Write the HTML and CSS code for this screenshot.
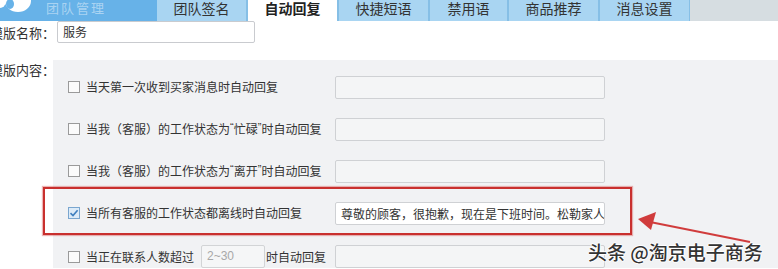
FILE: index.html
```html
<!DOCTYPE html>
<html lang="zh-CN">
<head>
<meta charset="utf-8">
<title>自动回复</title>
<link rel="stylesheet" href="styles.css">
</head>
<body>
<header class="topbar">
  <div class="logo">
    <svg class="logo-mark" width="40" height="14" viewBox="0 0 40 14">
      <ellipse cx="3" cy="2" rx="7" ry="6" fill="#fff"/>
      <ellipse cx="22" cy="1" rx="13" ry="11" fill="#fff"/>
      <ellipse cx="14" cy="4" rx="4" ry="5" fill="#67b2e8"/>
    </svg>
    <span class="logo-text">团队管理</span>
  </div>
  <nav class="tabs">
    <span class="tab">团队签名</span>
    <span class="tab tab-active">自动回复</span>
    <span class="tab">快捷短语</span>
    <span class="tab tab-narrow">禁用语</span>
    <span class="tab">商品推荐</span>
    <span class="tab">消息设置</span>
  </nav>
  <div class="topbar-rest"></div>
</header>

<main class="form">
  <div class="name-row">
    <span class="field-label">模版名称：</span>
    <div class="name-input">服务</div>
  </div>
  <div class="content-row">
    <span class="field-label content-label">模版内容：</span>
    <div class="panel">
      <div class="rule">
        <span class="cb"></span>
        <span class="rule-text">当天第一次收到买家消息时自动回复</span>
        <span class="reply-input"></span>
      </div>
      <div class="rule">
        <span class="cb"></span>
        <span class="rule-text">当我（客服）的工作状态为<span class="q">“</span>忙碌<span class="q">”</span>时自动回复</span>
        <span class="reply-input"></span>
      </div>
      <div class="rule">
        <span class="cb"></span>
        <span class="rule-text">当我（客服）的工作状态为<span class="q">“</span>离开<span class="q">”</span>时自动回复</span>
        <span class="reply-input"></span>
      </div>
      <div class="rule rule-marked">
        <span class="cb cb-checked">
          <svg width="12" height="12" viewBox="0 0 12 12"><path d="M2.5 6.2 L5 8.6 L9.6 3.2" fill="none" stroke="#3f7fbf" stroke-width="1.6"/></svg>
        </span>
        <span class="rule-text">当所有客服的工作状态都离线时自动回复</span>
        <span class="reply-input reply-filled">尊敬的顾客，很抱歉，现在是下班时间。松勒家人会在上班后第一时间回复您</span>
        <span class="highlight"></span>
      </div>
      <div class="rule rule-last">
        <span class="cb"></span>
        <span class="rule-text">当正在联系人数超过<span class="count-input">2~30</span>时自动回复</span>
        <span class="reply-input"></span>
      </div>
    </div>
  </div>
</main>

<svg class="arrow" width="778" height="269" viewBox="0 0 778 269">
  <line x1="750" y1="242" x2="650" y2="222" stroke="#d03c3c" stroke-width="2.2"/>
  <polygon points="638,219 656,212 651,230" fill="#d03c3c"/>
</svg>
<div class="watermark">头条 @淘京电子商务</div>
</body>
</html>
```
FILE: styles.css
```css
html, body {
  margin: 0;
  padding: 0;
}
body {
  width: 778px;
  height: 269px;
  overflow: hidden;
  position: relative;
  background: #fff;
  color: #333;
  font-family: "Noto Sans CJK SC", "Noto Sans", sans-serif;
}

/* top bar */
.topbar {
  display: flex;
  height: 21px;
  background: #86bfe6;
}
.logo {
  width: 157px;
  background: #67b2e8;
  position: relative;
  overflow: hidden;
  display: flex;
}
.logo-mark {
  flex: none;
  margin-left: -4px;
}
.logo-text {
  margin-left: 10px;
  padding-top: 1px;
  font-size: 13px;
  line-height: 14px;
  height: 14px;
  color: rgba(255, 255, 255, 0.45);
  letter-spacing: 2px;
}
.tabs {
  display: flex;
  gap: 2px;
}
.tab {
  width: 89px;
  background: #a9d5f2;
  font-size: 14px;
  line-height: 15px;
  padding-top: 1px;
  text-align: center;
  color: #333;
}
.tab-narrow {
  width: 77px;
}
.tab-active {
  background: #fff;
  color: #222;
  font-weight: bold;
}
.topbar-rest {
  flex: 1;
  margin-left: 1px;
  background: #d6dde1;
}

/* form */
.form {
  margin-left: -10px;
}
.field-label {
  font-size: 13px;
  color: #333;
  white-space: nowrap;
}
.name-row {
  display: flex;
  align-items: center;
  height: 22px;
}
.name-row .field-label {
  width: 67px;
}
.name-input {
  width: 198px;
  height: 22px;
  box-sizing: border-box;
  border: 1px solid #c9cbcf;
  border-radius: 2px;
  background: #fff;
  font-size: 12px;
  line-height: 20px;
  padding-left: 5px;
  color: #333;
}
.content-row {
  display: flex;
  margin-top: 17px;
}
.content-label {
  width: 63px;
  padding-top: 3px;
  line-height: 14px;
  flex: none;
}
.panel {
  flex: 1;
  background: #f1f2f4;
  padding: 6px 0 0 15px;
}
.rule {
  display: flex;
  align-items: center;
  height: 42px;
  position: relative;
}
.rule-last {
  height: auto;
  padding-top: 11px;
}
.cb {
  flex: none;
  width: 12px;
  height: 12px;
  box-sizing: border-box;
  border: 1px solid #9a9a9a;
  background: #fbfbfb;
  margin-right: 6px;
}
.cb-checked {
  border-color: #7aa6cf;
  background: #dcebf8;
  position: relative;
}
.cb-checked svg {
  position: absolute;
  left: -1px;
  top: -1px;
}
.rule-text {
  width: 249px;
  flex: none;
  font-size: 12px;
  line-height: 16px;
  white-space: nowrap;
  display: flex;
  align-items: center;
  color: #333;
}
.q {
  font-family: "Liberation Sans", Arial, sans-serif;
  font-size: 11px;
  align-self: flex-start;
  line-height: 12px;
}
.reply-input {
  width: 270px;
  height: 23px;
  box-sizing: border-box;
  border: 1px solid #cfd1d4;
  border-radius: 2px;
  background: #f4f5f6;
  flex: none;
}
.reply-filled {
  background: #fff;
  font-size: 12px;
  line-height: 21px;
  padding-left: 5px;
  white-space: nowrap;
  overflow: hidden;
  color: #333;
}
.count-input {
  width: 64px;
  height: 23px;
  box-sizing: border-box;
  border: 1px solid #d2d4d6;
  border-radius: 2px;
  background: #f5f6f7;
  margin-left: 7px;
  margin-right: 1px;
  padding-left: 5px;
  font-family: "Liberation Sans", Arial, sans-serif;
  font-size: 12px;
  line-height: 21px;
  color: #a8a8a8;
}
.highlight {
  position: absolute;
  left: -25px;
  top: -5px;
  width: 589px;
  height: 48px;
  box-sizing: border-box;
  border: 2px solid #c9302e;
  box-shadow: 0 0 1px 1px rgba(215, 90, 90, 0.45);
  pointer-events: none;
}

/* overlays */
.arrow {
  position: absolute;
  left: 0;
  top: 0;
  pointer-events: none;
}
.watermark {
  position: absolute;
  left: 588px;
  top: 241px;
  font-size: 19px;
  line-height: 22px;
  color: #333;
  font-weight: 500;
  white-space: nowrap;
  text-shadow: 1px 0 0 #fff, -1px 0 0 #fff, 0 1px 0 #fff, 0 -1px 0 #fff;
}
```
